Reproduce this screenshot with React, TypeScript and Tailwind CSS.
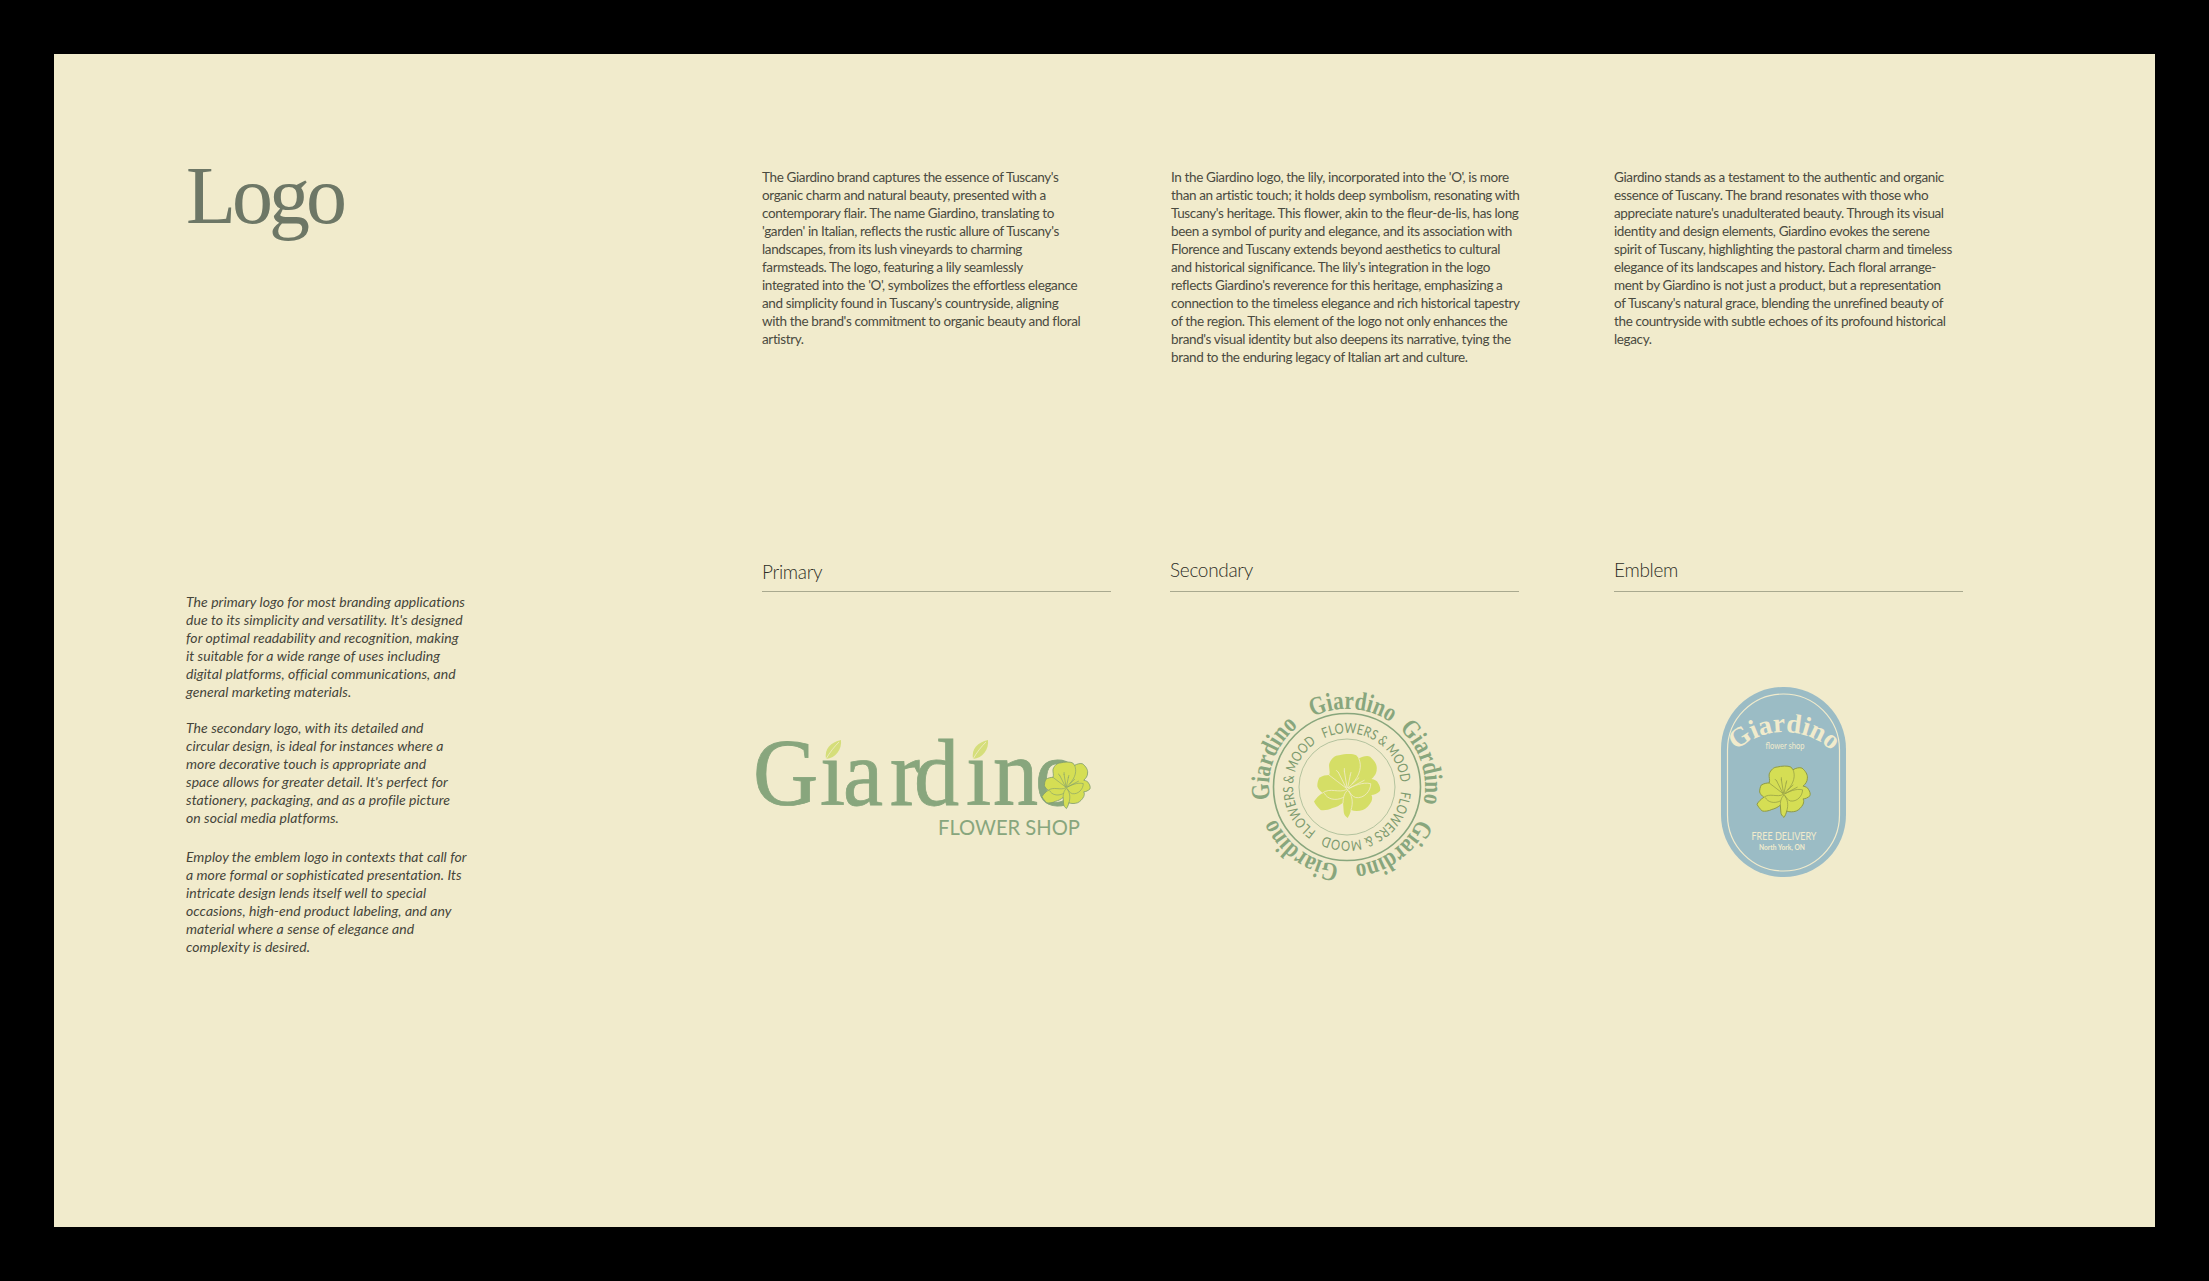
import React from "react";

const col1 = [
  "The Giardino brand captures the essence of Tuscany's",
  "organic charm and natural beauty, presented with a",
  "contemporary flair. The name Giardino, translating to",
  "'garden' in Italian, reflects the rustic allure of Tuscany's",
  "landscapes, from its lush vineyards to charming",
  "farmsteads. The logo, featuring a lily seamlessly",
  "integrated into the 'O', symbolizes the effortless elegance",
  "and simplicity found in Tuscany's countryside, aligning",
  "with the brand's commitment to organic beauty and floral",
  "artistry.",
];
const col2 = [
  "In the Giardino logo, the lily, incorporated into the 'O', is more",
  "than an artistic touch; it holds deep symbolism, resonating with",
  "Tuscany's heritage. This flower, akin to the fleur-de-lis, has long",
  "been a symbol of purity and elegance, and its association with",
  "Florence and Tuscany extends beyond aesthetics to cultural",
  "and historical significance. The lily's integration in the logo",
  "reflects Giardino's reverence for this heritage, emphasizing a",
  "connection to the timeless elegance and rich historical tapestry",
  "of the region. This element of the logo not only enhances the",
  "brand's visual identity but also deepens its narrative, tying the",
  "brand to the enduring legacy of Italian art and culture.",
];
const col3 = [
  "Giardino stands as a testament to the authentic and organic",
  "essence of Tuscany. The brand resonates with those who",
  "appreciate nature's unadulterated beauty. Through its visual",
  "identity and design elements, Giardino evokes the serene",
  "spirit of Tuscany, highlighting the pastoral charm and timeless",
  "elegance of its landscapes and history. Each floral arrange-",
  "ment by Giardino is not just a product, but a representation",
  "of Tuscany's natural grace, blending the unrefined beauty of",
  "the countryside with subtle echoes of its profound historical",
  "legacy.",
];
const notes = [
  [
    "The primary logo for most branding applications",
    "due to its simplicity and versatility. It's designed",
    "for optimal readability and recognition, making",
    "it suitable for a wide range of uses including",
    "digital platforms, official communications, and",
    "general marketing materials.",
  ],
  [
    "The secondary logo, with its detailed and",
    "circular design, is ideal for instances where a",
    "more decorative touch is appropriate and",
    "space allows for greater detail. It's perfect for",
    "stationery, packaging, and as a profile picture",
    "on social media platforms.",
  ],
  [
    "Employ the emblem logo in contexts that call for",
    "a more formal or sophisticated presentation. Its",
    "intricate design lends itself well to special",
    "occasions, high-end product labeling, and any",
    "material where a sense of elegance and",
    "complexity is desired.",
  ],
];

const BG = "#f1ebcc";
const OUTLINE =
  "M23 15 C26 7 32 2 38 2 C46 0 58 -1 64 2 L68 7 C73 4 80 2 85 4 C91 9 96 16 95 23 C95 30 91 34 87 38 C92 39 96 41 97 44 C100 48 101 53 100 56 C96 60 91 62 87 62 C89 66 88 69 87 72 C84 78 79 83 74 85 C68 87 61 87 56 85 C55 90 53 94 51 97 C47 94 45 91 45 87 L44 74 C39 78 33 81 28 82 C22 85 15 86 10 85 C6 81 2 77 0 72 C3 67 8 62 13 59 C9 56 6 53 5 49 C5 44 6 40 8 36 C13 33 18 32 23 32 C25 26 22 21 23 15 Z";
const VEINS =
  "M13 59 C24 50 38 60 49 54 M23 32 C32 38 40 46 49 52 M68 7 C73 18 70 32 58 45 M16 60 C20 68 32 72 44 66 M50 54 C60 48 74 42 86 45 C86 56 76 68 63 66 C58 64 55 60 53 56 M44 74 C44 64 47 58 51 55 C58 62 60 74 56 85 M49 52 L37 28 M50 51 L46 26 M51 51 L55 32 M52 51 L68 36 M53 52 L76 40 M37 28 l-3 -3 M46 26 l0 -4 M55 32 l1 -4";

function Flower({ x, y, w, fill, stroke, veinWidth, outlineWidth }: { x: number; y: number; w: number; fill: string; stroke: string; veinWidth: number; outlineWidth: number }) {
  const s = w / 100;
  return (
    <g transform={`translate(${x} ${y}) scale(${s})`}>
      <path d={OUTLINE} fill={fill} stroke={outlineWidth ? stroke : "none"} strokeWidth={outlineWidth / s} strokeLinejoin="round" />
      <path d={VEINS} fill="none" stroke={stroke} strokeWidth={veinWidth / s} strokeLinecap="round" strokeLinejoin="round" />
    </g>
  );
}

function Leaf({ x, y }: { x: number; y: number }) {
  return (
    <g transform={`translate(${x} ${y})`}>
      <rect x="-3" y="-2" width="21" height="14" fill={BG} />
      <path d="M0 19 C-2 9 5 2 15 0 C16 9 10 18 0 19 Z" fill="#d5de7a" />
      <path d="M0 19 C4 12 8 7 13 2" fill="none" stroke={BG} strokeWidth="0.8" />
    </g>
  );
}

function PrimaryLogo() {
  // origin of this drawing is page (750, 730)
  const k = 0.94;
  const xs = [3, 70, 93, 140, 164, 216, 243, 285].map((v) => (v / k).toFixed(1)).join(" ");
  return (
    <svg width="360" height="120" className="block shrink-0">
      <g transform={`scale(${k} 1)`}>
        <text x={xs} y="75" fontFamily="'Liberation Serif', serif" fontSize="96" fill="#88a67d" stroke="#88a67d" strokeWidth="0.8">
          Giardino
        </text>
      </g>
      <Leaf x={76} y={10} />
      <Leaf x={223} y={10} />
      <Flower x={292} y={32} w={48} fill="#d5de54" stroke="#7d9a6e" veinWidth={0.6} outlineWidth={0.8} />
      <text x="188" y="105" fontFamily="Lato, sans-serif" fontWeight="400" fontSize="21" fill="#88a67d" textLength="142" lengthAdjust="spacingAndGlyphs">
        FLOWER SHOP
      </text>
    </svg>
  );
}

function SecondaryLogo() {
  const rot = [4, 72, 144, 216, 291];
  const rot2 = [30, 150, 270];
  const cx = 110;
  const cy = 110;
  return (
    <svg width="220" height="220" className="block shrink-0">
      <defs>
        <path id="outerArc" d="M -67.5 39 A 78 78 0 1 1 67.5 39" fill="none" />
        <path id="innerArc" d="M -46.8 27 A 54 54 0 1 1 46.8 27" fill="none" />
      </defs>
      <g transform={`translate(${cx} ${cy})`}>
        <circle r="73.5" fill="none" stroke="#88a67d" strokeWidth="1.6" />
        <circle r="48" fill="none" stroke="#88a67d" strokeWidth="0.6" />
        {rot.map((a) => (
          <g key={a} transform={`rotate(${a})`}>
            <text fontFamily="'Liberation Serif', serif" fontWeight="700" fontSize="26" fill="#88a67d" textAnchor="middle">
              <textPath href="#outerArc" startOffset="50%" textLength="82" lengthAdjust="spacingAndGlyphs">Giardino</textPath>
            </text>
          </g>
        ))}
        {rot2.map((a) => (
          <g key={a} transform={`rotate(${a})`}>
            <text fontFamily="Lato, sans-serif" fontWeight="400" fontSize="14" fill="#7d9a6e" textAnchor="middle">
              <textPath href="#innerArc" startOffset="50%" textLength="104" lengthAdjust="spacingAndGlyphs">FLOWERS &amp; MOOD</textPath>
            </text>
          </g>
        ))}
      </g>
      <Flower x={cx - 33} y={cy - 33} w={66} fill="#d5de66" stroke={BG} veinWidth={0.8} outlineWidth={0} />
    </svg>
  );
}

function EmblemLogo() {
  // origin of this drawing is page (1715, 680)
  return (
    <svg width="140" height="204" className="block shrink-0">
      <defs>
        <path id="archArc" d="M 8.4 87 A 70 70 0 0 1 129.6 87" fill="none" />
      </defs>
      <rect x="6" y="7" width="125" height="190" rx="62" fill="#9bbcc5" />
      <rect x="12.5" y="14" width="112" height="177" rx="56" fill="none" stroke={BG} strokeWidth="1.2" />
      <text fontFamily="'Liberation Serif', serif" fontWeight="700" fontSize="27" fill={BG} textAnchor="middle">
        <textPath href="#archArc" startOffset="50%">Giardino</textPath>
      </text>
      <text x="70" y="69" textAnchor="middle" fontFamily="Lato, sans-serif" fontSize="9" fill={BG} textLength="39" lengthAdjust="spacingAndGlyphs">
        flower shop
      </text>
      <Flower x={42} y={86} w={53} fill="#d5de54" stroke="#8f9a45" veinWidth={0.7} outlineWidth={1} />
      <text x="69" y="160" textAnchor="middle" fontFamily="Lato, sans-serif" fontSize="11" fill={BG} textLength="65" lengthAdjust="spacingAndGlyphs">
        FREE DELIVERY
      </text>
      <text x="67" y="170" textAnchor="middle" fontFamily="Lato, sans-serif" fontWeight="700" fontSize="7.5" fill={BG} textLength="46" lengthAdjust="spacingAndGlyphs">
        North York, ON
      </text>
    </svg>
  );
}

function Para({ lines }: { lines: string[] }) {
  return (
    <p className="font-['Lato',sans-serif] text-[13.5px] leading-[18px] font-normal tracking-[-0.37px] text-[#4a4a3f] whitespace-nowrap">
      {lines.map((l) => (
        <span key={l} className="block">{l}</span>
      ))}
    </p>
  );
}

function Label({ text, pb }: { text: string; pb: string }) {
  return (
    <div className={`h-[37px] flex items-end border-b border-[#a9a98f] w-[349px] ${pb}`}>
      <span className="font-['Lato',sans-serif] font-light text-[19px] leading-[24px] tracking-[-0.3px] text-[#2e2e27]">{text}</span>
    </div>
  );
}

export default function App() {
  return (
    <div className="w-[2209px] h-[1281px] bg-black p-[54px]">
      <div className="h-full bg-[#f1ebcc] pl-[132px] pt-[114px]">
        <div className="grid grid-cols-[576px_408px_444px_349px] h-[387px]">
          <h1 className="font-['Liberation_Serif',serif] text-[82px] leading-[56px] tracking-[-4px] text-[#6d7766]">Logo</h1>
          <Para lines={col1} />
          <div className="pl-px"><Para lines={col2} /></div>
          <Para lines={col3} />
        </div>
        <div className="grid grid-cols-[576px_408px_444px_349px]">
          <div className="pt-[38px] flex flex-col gap-[18px]">
            {notes.map((n, i) => (
              <p key={i} className={`font-['Lato',sans-serif] italic text-[14px] leading-[18px] tracking-[0.05px] text-[#45453a] whitespace-nowrap ${i === 2 ? "mt-[3px]" : ""}`}>
                {n.map((l) => (
                  <span key={l} className="block">{l}</span>
                ))}
              </p>
            ))}
          </div>
          <div>
            <Label text="Primary" pb="pb-[7px]" />
            <div className="mt-[138px] -ml-[12px]"><PrimaryLogo /></div>
          </div>
          <div>
            <Label text="Secondary" pb="pb-[9px]" />
            <div className="mt-[85px] ml-[67px]"><SecondaryLogo /></div>
          </div>
          <div>
            <Label text="Emblem" pb="pb-[9px]" />
            <div className="mt-[88px] ml-[101px]"><EmblemLogo /></div>
          </div>
        </div>
      </div>
    </div>
  );
}
